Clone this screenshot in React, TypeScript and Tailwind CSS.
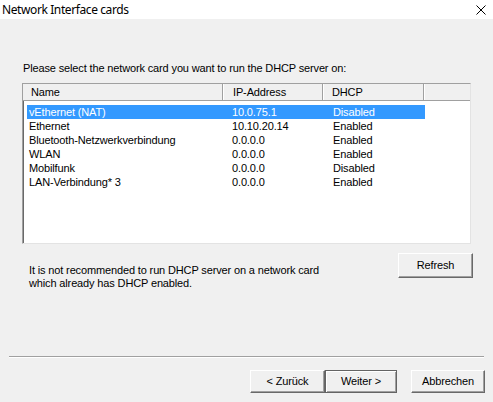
import React from "react";

const rows = [
  ["vEthernet (NAT)", "10.0.75.1", "Disabled"],
  ["Ethernet", "10.10.20.14", "Enabled"],
  ["Bluetooth-Netzwerkverbindung", "0.0.0.0", "Enabled"],
  ["WLAN", "0.0.0.0", "Enabled"],
  ["Mobilfunk", "0.0.0.0", "Disabled"],
  ["LAN-Verbindung* 3", "0.0.0.0", "Enabled"],
];

function Btn({ label, w, def }: { label: string; w: string; def?: boolean }) {
  return (
    <div
      className={`${w} h-[23px] flex items-center justify-center bg-[#f0f0f0] text-[11px] text-black border ${def ? "border-[#646464] shadow-[inset_1px_1px_0_#ffffff,inset_-1px_-1px_0_#a0a0a0]" : "border-t-white border-l-white border-b-[#696969] border-r-[#696969] shadow-[inset_-1px_-1px_0_#a0a0a0]"}`}
    >
      {label}
    </div>
  );
}

export default function App() {
  return (
    <div className="w-[493px] h-[402px] bg-[#f0f0f0] overflow-hidden tracking-[-0.14px]" style={{ fontFamily: '"Liberation Sans", Arial, sans-serif' }}>
      <div className="h-[19px] bg-white flex items-center justify-between">
        <div className="pl-[2px] text-[12px] text-black leading-none tracking-[-0.4px]" style={{ fontFamily: '"Noto Sans", sans-serif' }}>
          Network Interface cards
        </div>
        <svg width="10" height="10" viewBox="0 0 10 10" className="mr-[7px]">
          <path d="M0.5 0.5 L9.5 9.5 M9.5 0.5 L0.5 9.5" stroke="#000" strokeWidth="1" />
        </svg>
      </div>
      <div className="flex flex-col">
        <div className="mt-[43px] ml-[23px] text-[11px] leading-[13px] text-black">
          Please select the network card you want to run the DHCP server on:
        </div>
        <div className="mt-[8px] ml-[22px] w-[449px] h-[161px] bg-white border border-t-[#a0a0a0] border-l-[#a0a0a0] border-b-[#e3e3e3] border-r-[#e3e3e3] shadow-[inset_1px_1px_0_#696969] flex flex-col">
          <div className="h-[17px] flex bg-[#f0f0f0] border-b border-[#a0a0a0] text-[11px] text-black leading-[16px]">
            <div className="w-[200px] pl-[8px] border-r border-[#a0a0a0]">Name</div>
            <div className="w-[100px] pl-[9px] border-l border-l-white border-r border-[#a0a0a0]">IP-Address</div>
            <div className="w-[101px] pl-[8px] border-l border-l-white border-r border-[#a0a0a0]">DHCP</div>
            <div className="flex-1 border-l border-l-white" />
          </div>
          <div className="mt-[4px] flex flex-col">
            {rows.map((r, i) => (
              <div
                key={i}
                className={`ml-[4px] w-[398px] h-[14px] flex text-[11px] leading-[14px] ${i === 0 ? "bg-[#3399ff] text-white" : "text-black"}`}
              >
                <div className="w-[200px] pl-[2px]">{r[0]}</div>
                <div className="w-[101px] pl-[5px]">{r[1]}</div>
                <div className="flex-1 pl-[5px]">{r[2]}</div>
              </div>
            ))}
          </div>
        </div>
        <div className="mt-[9px] ml-[22px] w-[451px] flex justify-between items-start">
          <div className="mt-[11px] ml-[7px] text-[11px] leading-[13px] text-black">
            It is not recommended to run DHCP server on a network card
            <br />
            which already has DHCP enabled.
          </div>
          <div className="h-[25px] w-[75px] flex items-center justify-center bg-[#f0f0f0] text-[11px] text-black border border-t-white border-l-white border-b-[#696969] border-r-[#696969] shadow-[inset_-1px_-1px_0_#a0a0a0]">
            Refresh
          </div>
        </div>
        <div className="mt-[66px] ml-[9px] w-[475px] h-[1px] bg-[#a0a0a0] shadow-[0_1px_0_#ffffff]" />
        <div className="mt-[13px] flex pl-[250px]">
          <Btn label="< Zurück" w="w-[75px]" />
          <Btn label="Weiter >" w="w-[72px]" def />
          <div className="w-[14px]" />
          <Btn label="Abbrechen" w="w-[74px]" />
        </div>
      </div>
    </div>
  );
}
